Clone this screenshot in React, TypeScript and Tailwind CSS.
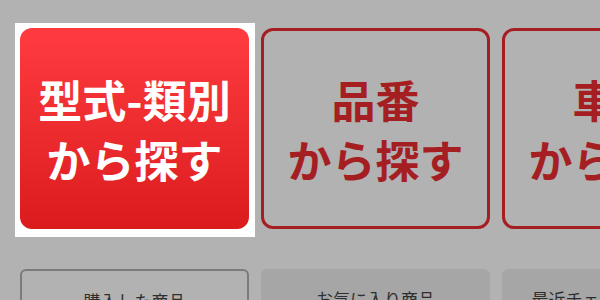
const font = { fontFamily: '"Noto Sans CJK JP", "Noto Sans", sans-serif' };

function BigCard({ lines, active }: { lines: string[]; active?: boolean }) {
  if (active) {
    return (
      <div className="relative h-[201px] w-[229px] shrink-0">
        {/* spotlight frame from the tutorial overlay */}
        <div className="absolute -left-[5px] -top-[5px] -right-[6px] -bottom-[8px] bg-white" />
        <div className="relative flex h-full w-full flex-col items-center justify-center rounded-[12px] bg-gradient-to-b from-[#ff3b40] to-[#db1a1c] text-[44px] font-bold leading-[60px] text-white">
          {lines.map((l) => (
            <span key={l} className="whitespace-nowrap">{l}</span>
          ))}
        </div>
      </div>
    );
  }
  return (
    <div className="flex h-[201px] w-[229px] shrink-0 flex-col items-center justify-center rounded-[12px] border-[3px] border-[#a51e22] text-[44px] font-bold leading-[60px] text-[#a51e22]">
      {lines.map((l) => (
        <span key={l} className="whitespace-nowrap">{l}</span>
      ))}
    </div>
  );
}

function SmallCard({ label, selected }: { label: string; selected?: boolean }) {
  return (
    <div
      className={
        "h-[80px] w-[229px] shrink-0 rounded-[6px] pt-[17px] text-center text-[17px] leading-[26px] text-[#2e2e2e] whitespace-nowrap " +
        (selected ? "border-2 border-[#7b7b7b]" : "bg-[#a6a6a6]")
      }
    >
      {label}
    </div>
  );
}

export default function App() {
  return (
    <div className="h-[300px] w-[600px] overflow-hidden bg-[#b2b2b2] pl-[20px] pt-[28px]" style={font}>
      <div className="flex gap-[12px]">
        <BigCard lines={["型式-類別", "から探す"]} active />
        <BigCard lines={["品番", "から探す"]} />
        <BigCard lines={["車種", "から探す"]} />
      </div>
      <div className="mt-[40px] flex gap-[12px]">
        <SmallCard label="購入した商品" selected />
        <SmallCard label="お気に入り商品" />
        <SmallCard label="最近チェックした商品" />
      </div>
    </div>
  );
}
